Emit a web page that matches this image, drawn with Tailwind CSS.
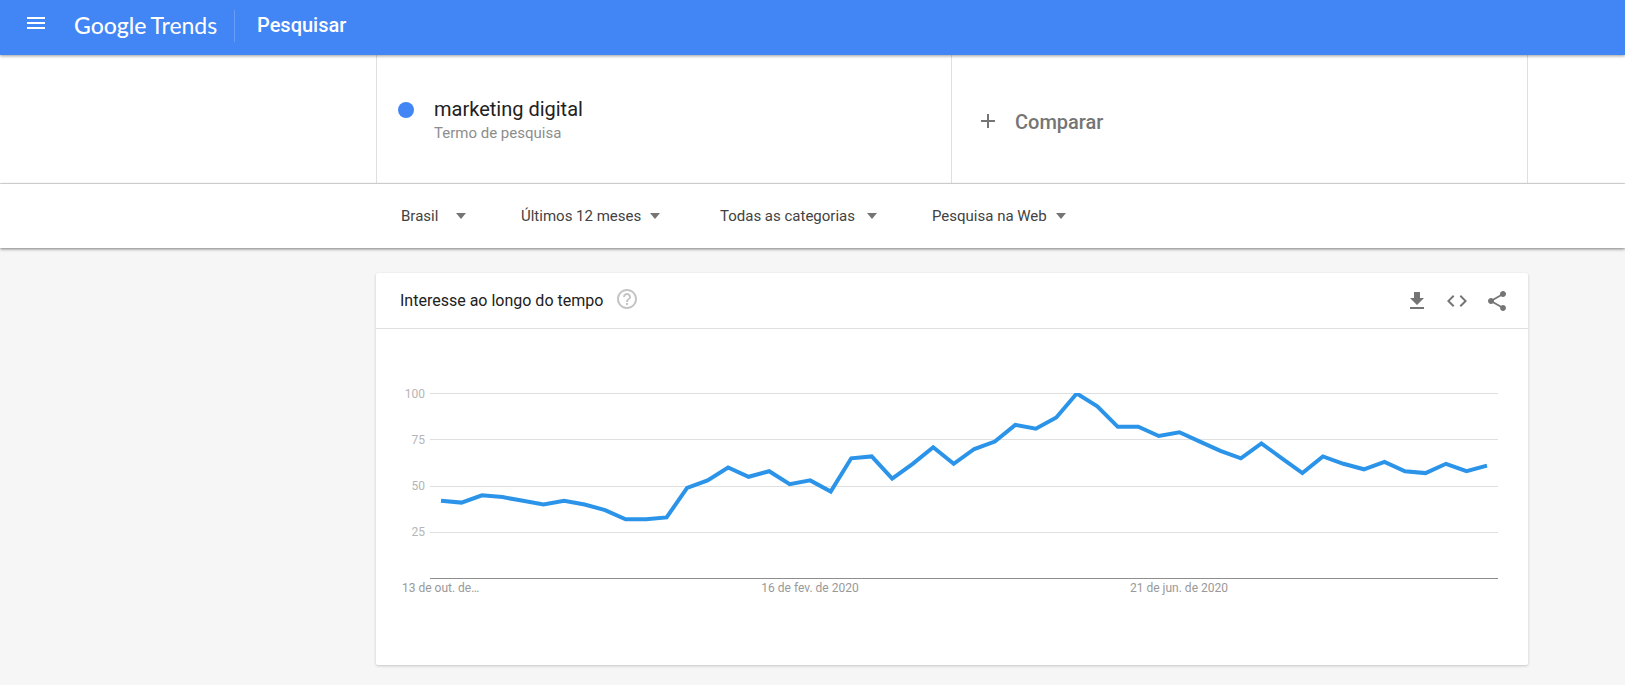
<!DOCTYPE html>
<html lang="pt-BR">
<head>
<meta charset="utf-8">
<meta name="viewport" content="width=device-width, initial-scale=1">
<title>Google Trends</title>
<script src="https://cdn.jsdelivr.net/npm/@tailwindcss/browser@4"></script>
</head>
<body class="min-h-screen bg-[#f6f6f6] font-['Roboto',sans-serif] text-[#212121]">
<header class="relative z-10 flex h-[55px] items-center bg-[#4285f4] pb-2 pl-6 text-white shadow-[0_1px_3px_rgba(0,0,0,0.4)]">
  <button type="button" aria-label="Menu" class="mr-6 block size-6">
    <svg viewBox="0 0 24 24" class="size-6" fill="currentColor"><path d="M3 17h18v-2H3v2zm0-5h18v-2H3v2zm0-7v2h18V5H3z"/></svg>
  </button>
  <a href="#" class="flex w-[162px] items-baseline gap-1 pt-0.5 pl-[2px] font-['Lato',sans-serif] text-[23px] leading-8"><span class="font-medium">Google</span><span>Trends</span></a>
  <span class="mt-1 h-8 w-px bg-white/20"></span>
  <h1 class="pt-0.5 pl-[22px] text-xl leading-8 font-medium">Pesquisar</h1>
</header>

<section class="border-b border-[#dfdfdf] bg-white pl-[279px]">
  <div class="mx-auto grid h-32 max-w-[1152px] grid-cols-2 border-x border-[#dfdfdf]">
    <div class="flex items-start gap-5 border-r border-[#dfdfdf] pt-10 pl-[21px]">
      <span class="mt-[7px] size-4 rounded-full bg-[#4285f4]"></span>
      <div>
        <p class="text-xl leading-7">marketing digital</p>
        <p class="text-[15px] leading-5 text-[#8d8d8d]">Termo de pesquisa</p>
      </div>
    </div>
    <button type="button" class="flex items-center gap-[15px] pt-1 pl-6 text-xl font-medium text-[#757575]">
      <svg viewBox="0 0 24 24" class="size-6" fill="currentColor"><path d="M19 13h-6v6h-2v-6H5v-2h6V5h2v6h6v2z"/></svg>
      <span class="pt-0.5">Comparar</span>
    </button>
  </div>
</section>

<nav class="relative bg-white pl-[279px] shadow-[0_1px_3px_rgba(0,0,0,0.5)]">
  <div class="mx-auto flex h-16 max-w-[1152px] items-center pl-[25px] text-[15px] leading-5 text-[#424242]">
    <button type="button" class="flex w-[120px] items-center gap-[18px]">Brasil <span class="border-x-5 border-t-6 border-x-transparent border-t-[#757575]"></span></button>
    <button type="button" class="flex w-[199px] items-center gap-[9px]">Últimos 12 meses <span class="border-x-5 border-t-6 border-x-transparent border-t-[#757575]"></span></button>
    <button type="button" class="flex w-[212px] items-center gap-3">Todas as categorias <span class="border-x-5 border-t-6 border-x-transparent border-t-[#757575]"></span></button>
    <button type="button" class="flex items-center gap-[9px]">Pesquisa na Web <span class="border-x-5 border-t-6 border-x-transparent border-t-[#757575]"></span></button>
  </div>
</nav>

<main class="pt-[25px] pb-5 pl-[279px]">
  <section class="mx-auto max-w-[1152px] rounded-xs bg-white shadow-[0_1px_3px_rgba(0,0,0,0.2)]">
    <div class="flex h-14 items-center border-b border-[#dfdfdf] pr-[19px] pl-6">
      <h2 class="text-base">Interesse ao longo do tempo</h2>
      <button type="button" aria-label="Ajuda" class="ml-3 pb-[3px] text-[#c4c4c4]">
        <svg viewBox="0 0 24 24" class="size-6" fill="currentColor"><path d="M11 18h2v-2h-2v2zm1-16C6.480 2 2 6.480 2 12s4.480 10 10 10 10-4.480 10-10S17.520 2 12 2zm0 18c-4.410 0-8-3.590-8-8s3.590-8 8-8 8 3.590 8 8-3.590 8-8 8zm0-14c-2.210 0-4 1.790-4 4h2c0-1.100.9-2 2-2s2 .9 2 2c0 2-3 1.750-3 5h2c0-2.250 3-2.500 3-5 0-2.210-1.790-4-4-4z"/></svg>
      </button>
      <div class="ml-auto flex gap-4 text-[#757575]">
        <button type="button" aria-label="Baixar"><svg viewBox="0 0 24 24" class="size-6" fill="currentColor"><path d="M19 9h-4V3H9v6H5l7 7 7-7zM5 18v2h14v-2H5z"/></svg></button>
        <button type="button" aria-label="Incorporar"><svg viewBox="0 0 24 24" class="size-6" fill="currentColor"><path d="M9.400 16.600L4.800 12l4.600-4.600L8 6l-6 6 6 6 1.400-1.400zm5.200 0l4.600-4.600-4.600-4.600L16 6l6 6-6 6-1.400-1.400z"/></svg></button>
        <button type="button" aria-label="Compartilhar"><svg viewBox="0 0 24 24" class="size-6" fill="currentColor"><path d="M18 16.080c-.76 0-1.440.3-1.960.77L8.910 12.700c.05-.23.09-.46.09-.7s-.04-.47-.09-.7l7.050-4.110c.54.5 1.250.81 2.040.81 1.660 0 3-1.340 3-3s-1.340-3-3-3-3 1.340-3 3c0 .24.040.47.090.7L8.040 9.810C7.500 9.310 6.790 9 6 9c-1.660 0-3 1.340-3 3s1.340 3 3 3c.79 0 1.500-.31 2.040-.81l7.120 4.160c-.05.210-.08.430-.08.650 0 1.610 1.310 2.920 2.920 2.920s2.920-1.310 2.920-2.920-1.310-2.920-2.920-2.920z"/></svg></button>
      </div>
    </div>
    <svg viewBox="0 0 1152 336" class="block h-auto w-full text-xs" role="img" aria-label="Interesse ao longo do tempo: marketing digital">
      <clipPath id="plot"><rect x="54" y="64" width="1068" height="186"/></clipPath>
      <path d="M54 64.500H1122M54 110.500H1122M54 157.500H1122M54 203.500H1122" stroke="#dfdfdf"/>
      <path d="M54 249.500H1122" stroke="#8e8e8e"/>
      <g fill="#b5b5b5" text-anchor="end">
        <text x="49" y="69">100</text><text x="49" y="115">75</text><text x="49" y="161">50</text><text x="49" y="207">25</text>
      </g>
      <g fill="#999">
        <text x="26" y="263">13 de out. de…</text>
        <text x="434" y="263" text-anchor="middle">16 de fev. de 2020</text>
        <text x="803" y="263" text-anchor="middle">21 de jun. de 2020</text>
      </g>
      <polyline id="series" clip-path="url(#plot)" fill="none" stroke="#2b94e9" stroke-width="4"/>
    </svg>
  </section>
</main>
<script>
  const weekly = [42,41,45,44,42,40,42,40,37,32,32,33,49,53,60,55,58,51,53,47,65,66,54,62,71,62,70,74,83,81,87,100,93,82,82,77,79,74,69,65,73,65,57,66,62,59,63,58,57,62,58,61];
  const step = 1046 / (weekly.length - 1);
  document.getElementById('series').setAttribute('points',
    weekly.map((v, i) => (65 + i * step).toFixed(1) + ',' + (249.5 - v * 1.85).toFixed(1)).join(' '));
</script>
</body>
</html>
